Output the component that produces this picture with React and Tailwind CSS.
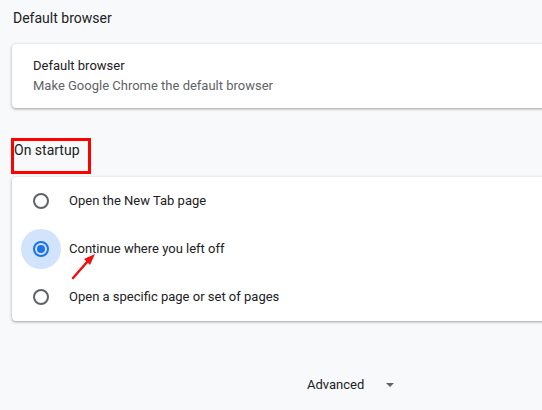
export default function App() {
  const options = [
    { label: 'Open the New Tab page', checked: false },
    { label: 'Continue where you left off', checked: true },
    { label: 'Open a specific page or set of pages', checked: false },
  ];

  return (
    <div className="relative w-[542px] h-[410px] overflow-hidden bg-[#f8f9fa] pl-3 pt-2 text-[13px] leading-5 text-[#202124]" style={{ fontFamily: 'Roboto, "Liberation Sans", sans-serif' }}>
      <div className="pl-[1px] text-[14px]">Default browser</div>

      <div className="mt-4 w-[560px] rounded bg-white py-3 pl-[21px] shadow-[0_1px_2px_0_rgba(60,64,67,0.3),0_1px_3px_1px_rgba(60,64,67,0.15)]">
        <div>Default browser</div>
        <div className="text-[#5f6368]">Make Google Chrome the default browser</div>
      </div>

      <div className="-ml-px mt-[30px] h-9 w-20 border-[3px] border-[#ff0000]">
        <div className="-mt-px text-[14px]">On startup</div>
      </div>

      <div className="mt-[3px] w-[560px] rounded bg-white shadow-[0_1px_2px_0_rgba(60,64,67,0.3),0_1px_3px_1px_rgba(60,64,67,0.15)]">
        {options.map((o) => (
          <div key={o.label} className="flex h-12 items-center pl-[9px]">
            <div className={`flex h-10 w-10 items-center justify-center rounded-full ${o.checked ? 'bg-[#d2e3fc]' : ''}`}>
              {o.checked ? (
                <div className="flex h-4 w-4 items-center justify-center rounded-full border-2 border-[#1a73e8]">
                  <div className="h-2 w-2 rounded-full bg-[#1a73e8]" />
                </div>
              ) : (
                <div className="h-4 w-4 rounded-full border-2 border-[#5f6368]" />
              )}
            </div>
            <div className="ml-2">{o.label}</div>
          </div>
        ))}
      </div>

      <div className="mt-[54px] flex items-center pl-[295px]">
        <span>Advanced</span>
        <svg className="ml-[22px]" width="8" height="4" viewBox="0 0 8 4">
          <path d="M0 0h8L4 4z" fill="#5f6368" />
        </svg>
      </div>

      <svg className="absolute left-0 top-0" width="542" height="410" viewBox="0 0 542 410">
        <line x1="73" y1="278" x2="88" y2="261" stroke="#ee1111" strokeWidth="2.5" strokeLinecap="round" />
        <path d="M95 254L84 259L90 265Z" fill="#ee1111" />
      </svg>
    </div>
  );
}
